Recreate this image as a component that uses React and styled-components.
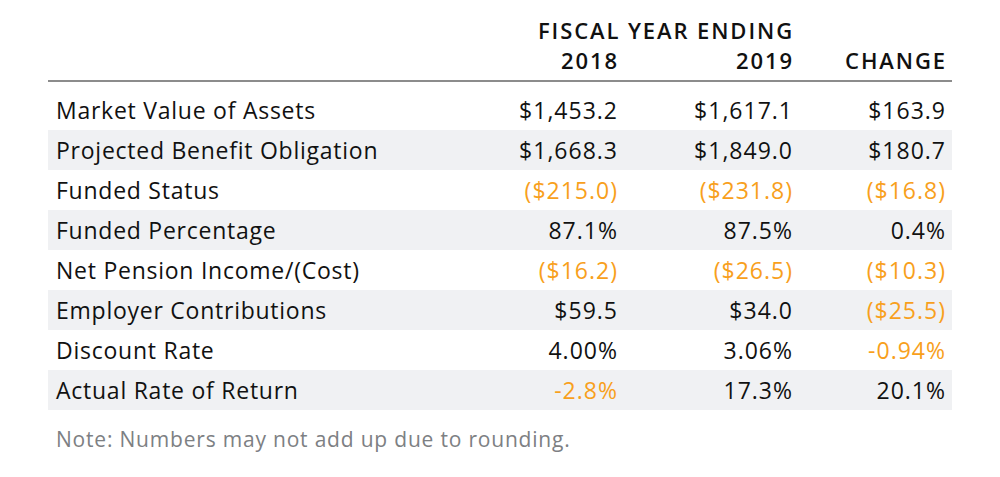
import React from 'react'
import styled, { createGlobalStyle } from 'styled-components'

const GlobalStyle = createGlobalStyle`
  body {
    margin: 0;
    background: #ffffff;
    font-family: 'Open Sans', 'Liberation Sans', sans-serif;
  }
`

const rows = [
  ['Market Value of Assets', '$1,453.2', '$1,617.1', '$163.9'],
  ['Projected Benefit Obligation', '$1,668.3', '$1,849.0', '$180.7'],
  ['Funded Status', '($215.0)', '($231.8)', '($16.8)'],
  ['Funded Percentage', '87.1%', '87.5%', '0.4%'],
  ['Net Pension Income/(Cost)', '($16.2)', '($26.5)', '($10.3)'],
  ['Employer Contributions', '$59.5', '$34.0', '($25.5)'],
  ['Discount Rate', '4.00%', '3.06%', '-0.94%'],
  ['Actual Rate of Return', '-2.8%', '17.3%', '20.1%'],
]

const isNegative = (v) => v.startsWith('(') || v.startsWith('-')

function App() {
  return (
    <Page>
      <GlobalStyle />
      <Table>
        <colgroup>
          <col />
          <col style={{ width: 176 }} />
          <col style={{ width: 175 }} />
          <col style={{ width: 153 }} />
        </colgroup>
        <thead>
          <tr>
            <HeadCell />
            <HeadCell colSpan={2} $top>
              FISCAL YEAR ENDING
            </HeadCell>
            <HeadCell />
          </tr>
          <HeadRow>
            <HeadCell />
            <HeadCell>2018</HeadCell>
            <HeadCell>2019</HeadCell>
            <HeadCell>CHANGE</HeadCell>
          </HeadRow>
        </thead>
        <tbody>
          <Spacer>
            <td colSpan={4} />
          </Spacer>
          {rows.map(([label, ...values], i) => (
            <Row key={label} $shaded={i % 2 === 1}>
              <Label>{label}</Label>
              {values.map((v, j) => (
                <Value key={j} $negative={isNegative(v)}>
                  {v}
                </Value>
              ))}
            </Row>
          ))}
        </tbody>
      </Table>
      <Note>Note: Numbers may not add up due to rounding.</Note>
    </Page>
  )
}

const Page = styled.div`
  padding: 10px 48px 0;
  width: 904px;
`

const Table = styled.table`
  width: 904px;
  border-collapse: collapse;
  table-layout: fixed;
`

const HeadRow = styled.tr`
  border-bottom: 2px solid #8c8c8c;
`

const HeadCell = styled.th`
  text-align: right;
  font-weight: 600;
  font-size: 22px;
  letter-spacing: 1.9px;
  color: #111;
  padding: 0 5px 0 0;
  height: 30px;
  line-height: 30px;
  padding-bottom: ${(p) => (p.$top ? '0' : '5px')};
  vertical-align: bottom;
  white-space: nowrap;
`

const Spacer = styled.tr`
  height: 9px;
`

const Row = styled.tr`
  height: 40px;
  background: ${(p) => (p.$shaded ? '#f0f1f3' : 'transparent')};
`

const Label = styled.td`
  font-size: 23px;
  letter-spacing: 0.75px;
  color: #111;
  padding: 0 0 0 8px;
  white-space: nowrap;
`

const Value = styled.td`
  font-size: 23px;
  letter-spacing: 1px;
  text-align: right;
  padding: 0 6px 0 0;
  color: ${(p) => (p.$negative ? '#f8a01c' : '#111')};
  white-space: nowrap;
`

const Note = styled.div`
  margin-top: 15px;
  font-size: 21px;
  letter-spacing: 0.8px;
  color: #7d8083;
  padding-left: 8px;
`

export default App
